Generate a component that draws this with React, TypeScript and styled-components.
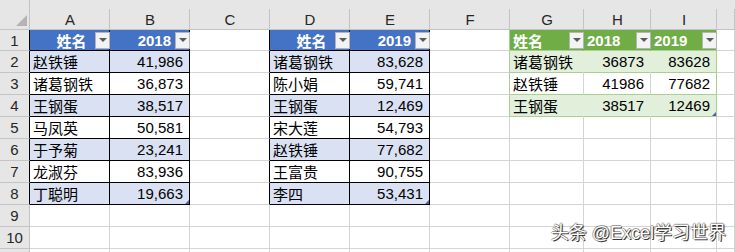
import React from 'react';
import styled, { createGlobalStyle } from 'styled-components';

// Colours taken from the Excel table styles
const BLUE_HEAD = '#4472c4';
const BLUE_BAND = '#d9e1f2';
const GREEN_HEAD = '#70ad47';
const GREEN_BAND = '#e2efda';
const GREEN_LINE = '#a9d08e';
const GRID = '#d4d4d4';
const HEAD_LINE = '#c4c4c4';

const GlobalStyle = createGlobalStyle`
  html, body {
    margin: 0;
    padding: 0;
    background: #fff;
    overflow: hidden;
  }
  body {
    font-family: "Liberation Sans", "Noto Sans CJK SC", sans-serif;
  }
`;

const Page = styled.div`
  position: relative;
  width: 735px;
  height: 252px;
  overflow: hidden;
`;

const Sheet = styled.div`
  display: grid;
  grid-template-columns: 30px 80px 80px 80px 80px 80px 80px 74px 67px 66px 1fr;
  grid-template-rows: 30px 21px repeat(10, 22px);
  font-size: 15px;
  color: #000;
`;

const Corner = styled.div`
  position: relative;
  background: #e6e6e6;
  border-bottom: 1px solid ${HEAD_LINE};
  box-shadow: inset -1px 0 0 ${HEAD_LINE};

  &::after {
    content: '';
    position: absolute;
    right: 3px;
    bottom: 3px;
    width: 0;
    height: 0;
    border-left: 11px solid transparent;
    border-bottom: 11px solid #b4b4b4;
  }
`;

const ColHead = styled.div`
  box-sizing: border-box;
  padding-top: 10px;
  display: flex;
  align-items: center;
  justify-content: center;
  color: #262626;
  background: linear-gradient(${HEAD_LINE}, ${HEAD_LINE}) right bottom / 1px 20px no-repeat, #e6e6e6;
  border-bottom: 1px solid ${HEAD_LINE};
`;

const RowHead = styled.div<{ $right: string }>`
  box-sizing: border-box;
  display: flex;
  align-items: center;
  justify-content: center;
  background: #e6e6e6;
  color: #262626;
  border-bottom: 1px solid ${HEAD_LINE};
  border-right: 1px solid ${({ $right }) => $right};
`;

const Cell = styled.div<{
  $bg: string;
  $right: string;
  $bottom: string;
  $align: string;
  $head?: boolean;
  $handle?: boolean;
}>`
  position: relative;
  box-sizing: border-box;
  display: flex;
  align-items: center;
  justify-content: ${({ $align }) => $align};
  padding: 0 ${({ $align }) => ($align === 'flex-end' ? '6px' : '3px')} 0 3px;
  background: ${({ $bg }) => $bg};
  color: ${({ $head }) => ($head ? '#fff' : '#000')};
  font-weight: ${({ $head }) => ($head ? 700 : 400)};
  border-right: 1px solid ${({ $right }) => $right};
  border-bottom: 1px solid ${({ $bottom }) => $bottom};
  white-space: nowrap;

  &::after {
    content: '';
    display: ${({ $handle }) => ($handle ? 'block' : 'none')};
    position: absolute;
    right: 0;
    bottom: 0;
    border-left: 4px solid transparent;
    border-bottom: 4px solid #4a5fa8;
  }
`;

const HeadText = styled.span<{ $align: string }>`
  flex: 1;
  text-align: ${({ $align }) => $align};
  padding-left: ${({ $align }) => ($align === 'center' ? '15px' : '0')};
  margin-right: ${({ $align }) => ($align === 'right' ? '4px' : '0')};
`;

const FilterButton = styled.span`
  box-sizing: border-box;
  flex: none;
  width: 15px;
  height: 17px;
  margin-right: -4px;
  display: flex;
  align-items: center;
  justify-content: center;
  background: #f3f3f3;
  border: 1px solid #b4b4b4;

  &::before {
    content: '';
    width: 0;
    height: 0;
    border-left: 4px solid transparent;
    border-right: 4px solid transparent;
    border-top: 4px solid #5a5a5a;
  }
`;

const Watermark = styled.div`
  position: absolute;
  right: 9px;
  bottom: 8px;
  font-family: "Liberation Sans", "Noto Sans CJK SC", sans-serif;
  font-size: 18px;
  color: #ffffff;
  text-shadow: 1px 1px 0 #3a3a3a, -1px 0 0 rgba(0, 0, 0, 0.35), 0 -1px 0 rgba(0, 0, 0, 0.35),
    1px 0 1px rgba(0, 0, 0, 0.5);
  white-space: nowrap;
`;

type CellInfo = {
  text?: string;
  bg: string;
  right: string;
  bottom: string;
  align: string;
  head?: boolean;
  headAlign?: string;
  filter?: boolean;
  handle?: boolean;
};

const cols = ['A', 'B', 'C', 'D', 'E', 'F', 'G', 'H', 'I', ''];

const blueA = [
  ['赵铁锤', '41,986'],
  ['诸葛钢铁', '36,873'],
  ['王钢蛋', '38,517'],
  ['马凤英', '50,581'],
  ['于予菊', '23,241'],
  ['龙淑芬', '83,936'],
  ['丁聪明', '19,663'],
];

const blueB = [
  ['诸葛钢铁', '83,628'],
  ['陈小娟', '59,741'],
  ['王钢蛋', '12,469'],
  ['宋大莲', '54,793'],
  ['赵铁锤', '77,682'],
  ['王富贵', '90,755'],
  ['李四', '53,431'],
];

const greenData = [
  ['诸葛钢铁', '36873', '83628'],
  ['赵铁锤', '41986', '77682'],
  ['王钢蛋', '38517', '12469'],
];

// Which colour the right border of a column takes on a given row
const rightLine = (c: number, r: number): string => {
  if (r <= 8 && [0, 1, 2, 3, 4].includes(c)) return '#000';
  if (r <= 4 && (c === 5 || c === 8)) return GREEN_LINE;
  return GRID;
};

const blueCell = (data: string[][], c: number, r: number, year: string): CellInfo => {
  const bg = r === 1 ? BLUE_HEAD : r % 2 === 0 ? BLUE_BAND : '#fff';
  const base = { bg, right: '#000', bottom: '#000' };
  if (r === 1) {
    return c === 0
      ? { ...base, text: '姓名', align: 'flex-start', head: true, headAlign: 'center', filter: true }
      : { ...base, text: year, align: 'flex-start', head: true, headAlign: 'right', filter: true };
  }
  return {
    ...base,
    text: data[r - 2][c],
    align: c === 0 ? 'flex-start' : 'flex-end',
    handle: r === 8 && c === 1,
  };
};

const greenCell = (c: number, r: number): CellInfo => {
  const band = r === 2 || r === 4;
  const bg = r === 1 ? GREEN_HEAD : band ? GREEN_BAND : '#fff';
  const right = c === 2 ? GREEN_LINE : r === 3 ? GRID : bg;
  if (r === 1) {
    return {
      bg,
      right,
      bottom: GREEN_LINE,
      text: ['姓名', '2018', '2019'][c],
      align: 'flex-start',
      head: true,
      headAlign: 'left',
      filter: true,
    };
  }
  return {
    bg,
    right,
    bottom: GREEN_LINE,
    text: greenData[r - 2][c],
    align: c === 0 ? 'flex-start' : 'flex-end',
    handle: r === 4 && c === 2,
  };
};

const cellAt = (c: number, r: number): CellInfo => {
  if (r <= 8 && c <= 1) return blueCell(blueA, c, r, '2018');
  if (r <= 8 && (c === 3 || c === 4)) return blueCell(blueB, c - 3, r, '2019');
  if (r <= 4 && c >= 6 && c <= 8) return greenCell(c - 6, r);
  return { bg: '#fff', right: rightLine(c, r), bottom: GRID, align: 'flex-start' };
};

const rows = Array.from({ length: 11 }, (_, i) => i + 1);

const App = () => {
  return (
    <Page>
      <GlobalStyle />
      <Sheet>
        <Corner />
        {cols.map((name, i) => (
          <ColHead key={i}>{name}</ColHead>
        ))}
        {rows.map((r) => (
          <React.Fragment key={r}>
            {/* row 11 only peeks in at the bottom edge, so its number stays hidden */}
            <RowHead $right={r <= 8 ? '#000' : HEAD_LINE}>{r <= 10 ? r : ''}</RowHead>
            {cols.map((_, c) => {
              const info = cellAt(c, r);
              return (
                <Cell
                  key={c}
                  $bg={info.bg}
                  $right={info.right}
                  $bottom={info.bottom}
                  $align={info.align}
                  $head={info.head}
                  $handle={info.handle}
                >
                  {info.filter ? (
                    <>
                      <HeadText $align={info.headAlign ?? 'left'}>{info.text}</HeadText>
                      <FilterButton />
                    </>
                  ) : (
                    info.text
                  )}
                </Cell>
              );
            })}
          </React.Fragment>
        ))}
      </Sheet>
      <Watermark>头条 @Excel学习世界</Watermark>
    </Page>
  );
};

export default App;
